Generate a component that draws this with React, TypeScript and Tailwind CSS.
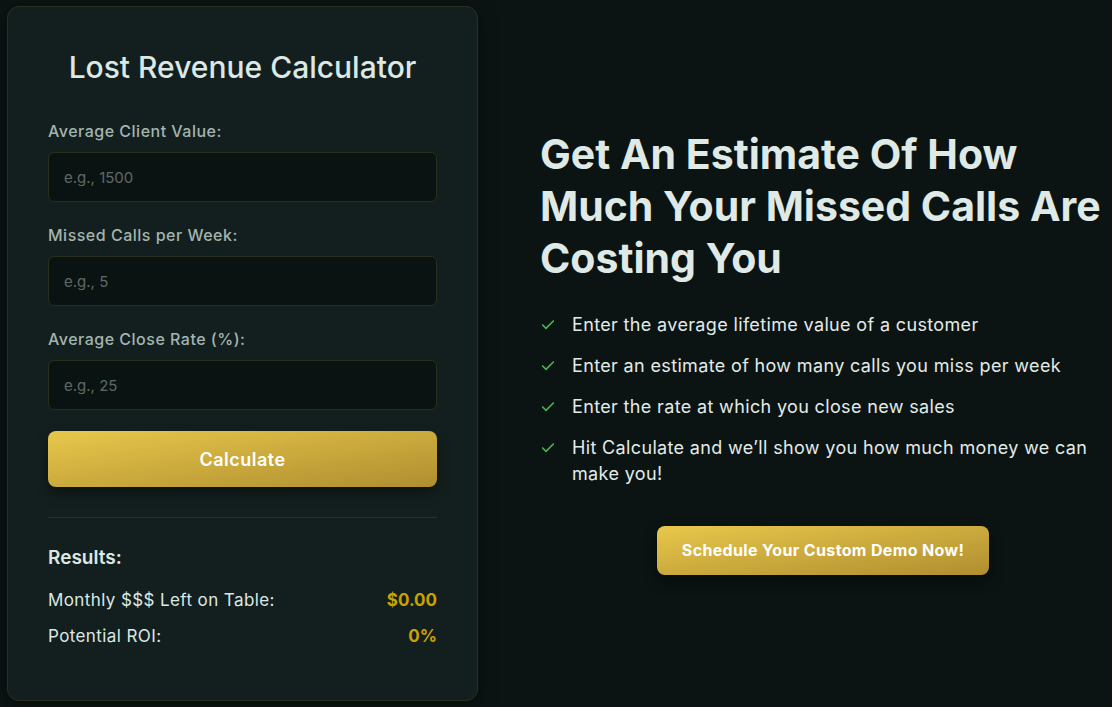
import React, { useState } from "react";
import { Check } from "lucide-react";

/* Lost revenue calculator: card on the left, pitch + demo button on the right */

const steps = [
  "Enter the average lifetime value of a customer",
  "Enter an estimate of how many calls you miss per week",
  "Enter the rate at which you close new sales",
  "Hit Calculate and we\u2019ll show you how much money we can make you!",
];

function Field(props: { label: string; placeholder: string; value: string; onChange: (v: string) => void }) {
  const { label, placeholder, value, onChange } = props;
  return (
    <div className="flex flex-col">
      <label className="mb-[10px] text-[16px] font-medium leading-[22px] tracking-[0.5px] text-[#a4b4af]">{label}</label>
      <input
        className="h-[50px] w-full rounded-md border border-[#2a2e1c] bg-[#0b1312] px-[15px] text-[15px] text-[#dce8e4] placeholder:text-[#5f6966] outline-none"
        placeholder={placeholder}
        value={value}
        onChange={(e) => onChange(e.target.value)}
      />
    </div>
  );
}

export default function App() {
  const [clientValue, setClientValue] = useState("");
  const [missed, setMissed] = useState("");
  const [rate, setRate] = useState("");
  const [monthly, setMonthly] = useState(0);
  const [roi, setRoi] = useState(0);

  const calculate = () => {
    const v = parseFloat(clientValue) || 0;
    const m = parseFloat(missed) || 0;
    const r = (parseFloat(rate) || 0) / 100;
    const lost = v * m * r * 4;
    setMonthly(lost);
    setRoi(lost > 0 ? Math.round((lost / 297) * 100) : 0);
  };

  return (
    <div className="min-h-screen w-full bg-[#0b1413] font-['Inter',sans-serif] text-[#dce8e4]">
      <div className="flex items-center gap-[62px] pl-[7px] pt-[6px] pb-2">
        {/* calculator card */}
        <div className="w-[471px] shrink-0 rounded-xl border border-[#2b301d] bg-[#131f1e] px-10 pt-[43px] pb-[52px] shadow-[0_4px_20px_rgba(0,0,0,0.35)]">
          <h2 className="text-center text-[30px] font-medium leading-[34px] text-[#dce8e4]">Lost Revenue Calculator</h2>
          <div className="mt-[36px] flex flex-col gap-[22px]">
            <Field label="Average Client Value:" placeholder="e.g., 1500" value={clientValue} onChange={setClientValue} />
            <Field label="Missed Calls per Week:" placeholder="e.g., 5" value={missed} onChange={setMissed} />
            <Field label="Average Close Rate (%):" placeholder="e.g., 25" value={rate} onChange={setRate} />
          </div>
          <button
            onClick={calculate}
            className="mt-[21px] h-[56px] w-full rounded-lg bg-gradient-to-br from-[#e8c84b] to-[#b08e30] text-[18px] font-semibold tracking-[0.5px] text-white shadow-[0_6px_14px_rgba(0,0,0,0.4)]"
          >
            Calculate
          </button>
          <div className="mt-[30px] border-t border-[#283222] pt-[27px]">
            <h3 className="text-[19px] font-semibold leading-[26px] text-[#dce8e4]">Results:</h3>
            <div className="mt-[17px] flex items-center justify-between text-[17px] leading-[24px] tracking-[0.4px]">
              <span>Monthly $$$ Left on Table:</span>
              <span className="text-[17px] font-bold tracking-normal text-[#c9a200]">${monthly.toFixed(2)}</span>
            </div>
            <div className="mt-[12px] flex items-center justify-between text-[17px] leading-[24px] tracking-[0.4px]">
              <span>Potential ROI:</span>
              <span className="text-[17px] font-bold tracking-normal text-[#c9a200]">{roi}%</span>
            </div>
          </div>
        </div>

        {/* pitch */}
        <div className="flex w-[566px] shrink-0 flex-col pb-[5px]">
          <h1 className="text-[41px] font-bold leading-[52px] text-[#dfe9e6]">
            Get An Estimate Of How Much Your Missed Calls Are Costing You
          </h1>
          <ul className="mt-[28px] flex flex-col gap-[15px]">
            {steps.map((s) => (
              <li key={s} className="flex items-start gap-4 text-[18px] leading-[26px] tracking-[0.35px] text-[#e2ebe8]">
                <Check className="mt-[5px] h-4 w-4 shrink-0 text-[#4caf50]" strokeWidth={2.5} />
                <span>{s}</span>
              </li>
            ))}
          </ul>
          <div className="mt-[39px] flex justify-center">
            <button className="h-[49px] rounded-lg bg-gradient-to-br from-[#e8c84b] to-[#b08e30] px-[25px] text-[16px] font-bold tracking-[0.35px] text-white shadow-[0_6px_14px_rgba(0,0,0,0.45)]">
              Schedule Your Custom Demo Now!
            </button>
          </div>
        </div>
      </div>
    </div>
  );
}
